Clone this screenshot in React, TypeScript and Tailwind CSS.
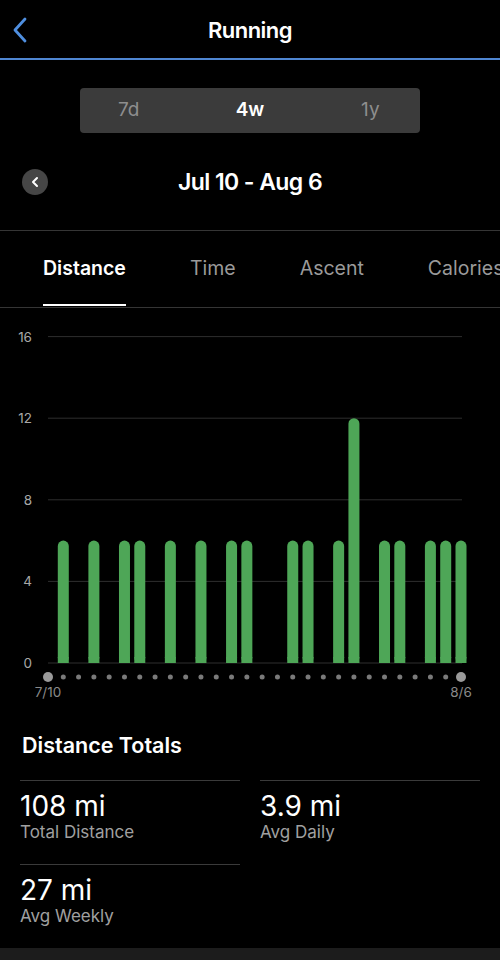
import React from "react"

const days = 28
const x0 = 48
const step = (461 - 48) / 27
const unit = 20.4
const base = 353

const data: Record<number, number> = {
  1: 6, 3: 6, 5: 6, 6: 6, 8: 6, 10: 6, 12: 6, 13: 6,
  16: 6, 17: 6, 19: 6, 20: 12, 22: 6, 23: 6, 25: 6, 26: 6, 27: 6,
}

function Chart() {
  const grid = [16, 12, 8, 4, 0]
  return (
    <svg width="500" height="396" className="block mt-[2px]">
      {grid.map((v) => {
        const y = base - v * unit
        return (
          <g key={v}>
            <line x1={48} x2={462} y1={y} y2={y} stroke="#2e2e2e" strokeWidth={1} />
            <text x={32} y={y + 5} textAnchor="end" fill="#a8a8a8" fontSize={13.5} fontFamily="Inter, sans-serif">{v}</text>
          </g>
        )
      })}
      {Object.entries(data).map(([d, v]) => {
        const cx = x0 + Number(d) * step
        const h = v * unit
        return <rect key={d} x={cx - 5.5} y={base - h} width={11} height={h} rx={5.5} fill="#4ea657" />
      })}
      {Object.entries(data).map(([d]) => {
        const cx = x0 + Number(d) * step
        return <rect key={"b" + d} x={cx - 5.5} y={base - 6} width={11} height={6} fill="#4ea657" />
      })}
      {Array.from({ length: days }).map((_, i) => {
        const cx = x0 + i * step
        const big = i === 0 || i === days - 1
        return <circle key={i} cx={cx} cy={367} r={big ? 5 : 2.5} fill={big ? "#9a9a9a" : "#7a7a7a"} />
      })}
      <text x={48} y={387} textAnchor="middle" fill="#8a8a8a" fontSize={13.5} fontFamily="Inter, sans-serif">7/10</text>
      <text x={461} y={387} textAnchor="middle" fill="#8a8a8a" fontSize={13.5} fontFamily="Inter, sans-serif">8/6</text>
    </svg>
  )
}

function Stat({ value, label }: { value: string; label: string }) {
  return (
    <div className="border-t border-[#3a3a3a] pt-[9px] pb-[22px]">
      <div className="text-[28px] leading-[32px] text-white">{value}</div>
      <div className="text-[17px] leading-[20px] text-[#a0a0a0]">{label}</div>
    </div>
  )
}

export default function App() {
  return (
    <div className="w-[500px] h-[960px] bg-black text-white overflow-hidden flex flex-col" style={{ fontFamily: "Inter, 'Noto Sans', sans-serif" }}>
      <div className="relative h-[58px] flex items-center justify-center pt-[3px]">
        <svg className="absolute left-[12px] top-[16px]" width="16" height="28" viewBox="0 0 16 28">
          <path d="M13 3 L3 14 L13 25" fill="none" stroke="#4f8fe0" strokeWidth="2.8" strokeLinecap="round" strokeLinejoin="round" />
        </svg>
        <h1 className="text-[22px] font-semibold tracking-tight">Running</h1>
      </div>
      <div className="h-[2px] bg-[#4f86d2]" />

      <div className="mt-[28px] mx-auto w-[340px] h-[45px] rounded-[4px] bg-[#3b3b3b] grid grid-cols-3 items-center text-center text-[19px]">
        <span className="text-[#8e8e8e] pr-[16px]">7d</span>
        <span className="font-semibold text-white">4w</span>
        <span className="text-[#8e8e8e] pl-[14px]">1y</span>
      </div>

      <div className="relative mt-[34px] h-[30px] flex items-center justify-center">
        <div className="absolute left-[22px] top-[2px] w-[26px] h-[26px] rounded-full bg-[#464646] flex items-center justify-center">
          <svg width="10" height="12" viewBox="0 0 10 12">
            <path d="M7 2 L3 6 L7 10" fill="none" stroke="#ffffff" strokeWidth="2" strokeLinecap="round" strokeLinejoin="round" />
          </svg>
        </div>
        <span className="text-[23px] font-semibold tracking-tight">Jul 10 - Aug 6</span>
      </div>

      <div className="mt-[33px] border-t border-[#353535] h-[78px] border-b flex items-stretch whitespace-nowrap text-[19.5px]">
        <div className="ml-[43px] flex flex-col justify-center relative w-[84px]">
          <span className="font-semibold text-white">Distance</span>
          <div className="absolute left-0 right-0 bottom-[1px] h-[2px] bg-white" />
        </div>
        <div className="ml-[64px] flex items-center text-[#9a9a9a]">Time</div>
        <div className="ml-[64px] flex items-center text-[#9a9a9a]">Ascent</div>
        <div className="ml-[64px] flex items-center text-[#9a9a9a]">Calories</div>
      </div>

      <Chart />

      <div className="px-[20px] pt-[25px]">
        <h2 className="px-[2px] text-[21.5px] font-semibold leading-[28px]">Distance Totals</h2>
        <div className="mt-[21px] grid grid-cols-2 gap-x-[20px]">
          <Stat value="108 mi" label="Total Distance" />
          <Stat value="3.9 mi" label="Avg Daily" />
          <Stat value="27 mi" label="Avg Weekly" />
        </div>
      </div>

      <div className="mt-auto h-[12px] bg-[#1c1c1c]" />
    </div>
  )
}
